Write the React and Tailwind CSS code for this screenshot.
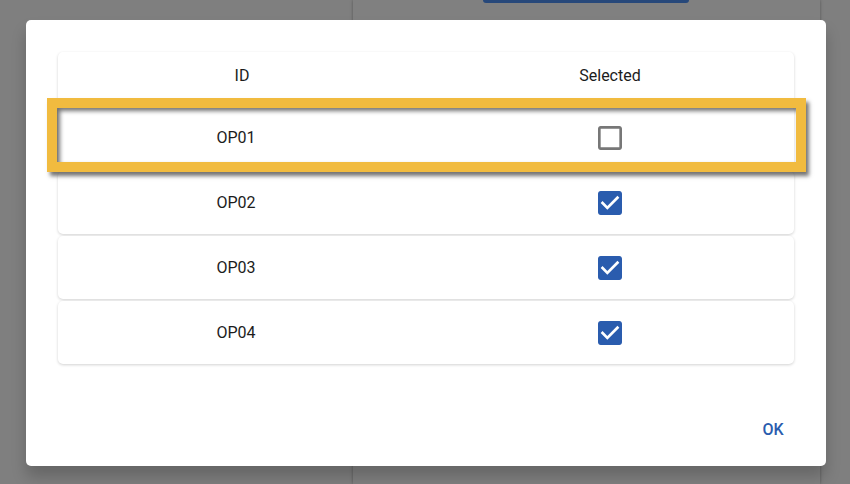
import React from "react";

const rows = [
  { id: "OP01", selected: false },
  { id: "OP02", selected: true },
  { id: "OP03", selected: true },
  { id: "OP04", selected: true },
];

function CheckIcon({ checked }) {
  if (checked) {
    return (
      <svg width="32" height="32" viewBox="0 0 24 24" className="text-[#2a5cae]" fill="currentColor">
        <path d="M19 3H5c-1.11 0-2 .9-2 2v14c0 1.1.89 2 2 2h14c1.11 0 2-.9 2-2V5c0-1.1-.89-2-2-2zm-9 14l-5-5 1.41-1.41L10 14.17l7.59-7.59L19 8l-9 9z" />
      </svg>
    );
  }
  return (
    <svg width="32" height="32" viewBox="0 0 24 24" className="text-[#777777]" fill="currentColor">
      <path d="M19 5v14H5V5h14m0-2H5c-1.1 0-2 .9-2 2v14c0 1.1.9 2 2 2h14c1.1 0 2-.9 2-2V5c0-1.1-.9-2-2-2z" />
    </svg>
  );
}

export default function App() {
  return (
    <div className="relative h-[484px] w-[850px] overflow-hidden bg-[#7f7f7f] font-['Roboto',sans-serif]">
      {/* page behind the dialog, dimmed */}
      <div className="ml-[353px] flex h-full w-[467px] flex-col bg-[#808080] shadow-[0_0_3px_rgba(0,0,0,0.35)]">
        <div className="ml-[130px] h-[3px] w-[206px] rounded-b-[4px] bg-[#27487a]" />
        <div className="ml-[12px] mt-[14px] text-[14px] font-medium text-[#1a1a1a]">PDAS Customiz</div>
      </div>

      {/* dialog */}
      <div className="absolute left-[26px] top-[20px] flex h-[446px] w-[800px] flex-col rounded-[5px] bg-white shadow-[0_11px_15px_rgba(0,0,0,0.2)]">
        <div className="px-[32px] pt-[32px]">
          <div className="flex flex-col gap-[2px] text-[16px] text-[#1c1c1c]">
            <div className="grid h-[52px] grid-cols-2 items-center rounded-t-[5px] bg-white pb-[4px] text-center shadow-[0_1px_3px_rgba(0,0,0,0.18)]">
              <div>ID</div>
              <div>Selected</div>
            </div>
            {rows.map((r) => (
              <div
                key={r.id}
                className="grid h-[63px] grid-cols-2 items-center rounded-[5px] bg-white text-center shadow-[0_1px_3px_rgba(0,0,0,0.18)]"
              >
                <div className="pr-[12px]">{r.id}</div>
                <div className="flex justify-center">
                  <CheckIcon checked={r.selected} />
                </div>
              </div>
            ))}
          </div>
        </div>

        <div className="mt-auto flex justify-end pb-[18px] pr-[21px]">
          <button className="flex h-[36px] w-[64px] items-center justify-center rounded-[4px] text-[16px] font-medium text-[#2a5cae]">
            OK
          </button>
        </div>

        {/* highlight over first row */}
        <div className="pointer-events-none absolute left-[21px] top-[78px] h-[74px] w-[759px] border-[10px] border-[#f1bb3f] shadow-[3px_4px_4px_rgba(0,0,0,0.55),inset_3px_3px_4px_rgba(0,0,0,0.55)]" />
      </div>
    </div>
  );
}
